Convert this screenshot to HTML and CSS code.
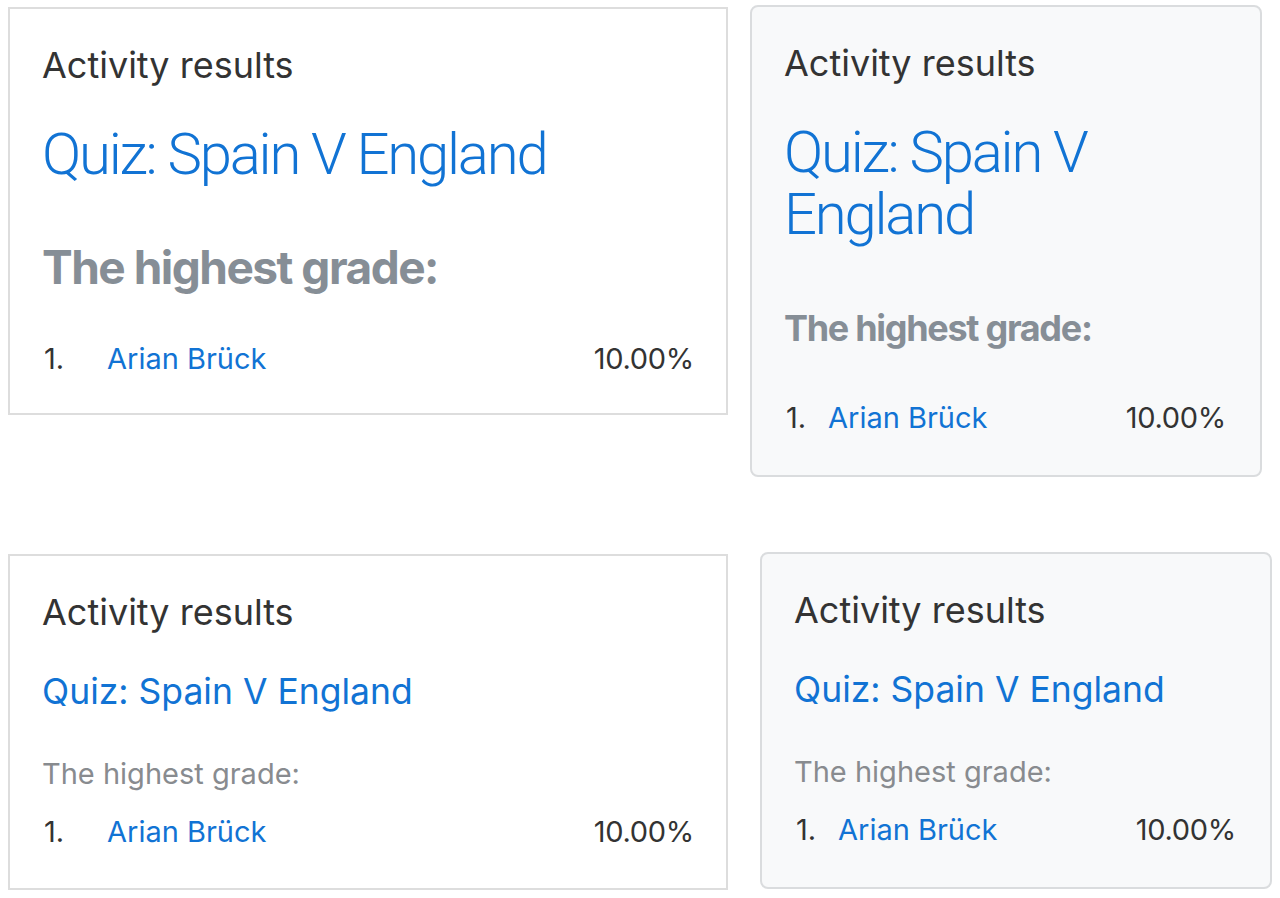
FILE: index.html
```html
<!DOCTYPE html>
<html lang="en">
<head>
<meta charset="utf-8">
<title>Activity results</title>
<link rel="stylesheet" href="styles.css">
</head>
<body>
<main class="page">
  <div class="row row-top">
    <section class="card card-plain card-a">
      <h5 class="card-title">Activity results</h5>
      <h2 class="quiz quiz-lg"><a href="#">Quiz: Spain V England</a></h2>
      <h3 class="grade grade-lg">The highest grade:</h3>
      <div class="result result-wide">
        <span class="rank">1.</span>
        <a class="name" href="#">Arian Brück</a>
        <span class="score">10.00%</span>
      </div>
    </section>
    <section class="card card-muted card-b">
      <h5 class="card-title">Activity results</h5>
      <h2 class="quiz quiz-lg"><a href="#">Quiz: Spain V England</a></h2>
      <h3 class="grade grade-md">The highest grade:</h3>
      <div class="result result-tight">
        <span class="rank">1.</span>
        <a class="name" href="#">Arian Brück</a>
        <span class="score">10.00%</span>
      </div>
    </section>
  </div>
  <div class="row row-bottom">
    <section class="card card-plain card-c">
      <h5 class="card-title">Activity results</h5>
      <h2 class="quiz quiz-sm"><a href="#">Quiz: Spain V England</a></h2>
      <h3 class="grade grade-sm">The highest grade:</h3>
      <div class="result result-wide">
        <span class="rank">1.</span>
        <a class="name" href="#">Arian Brück</a>
        <span class="score">10.00%</span>
      </div>
    </section>
    <section class="card card-muted card-d">
      <h5 class="card-title">Activity results</h5>
      <h2 class="quiz quiz-sm"><a href="#">Quiz: Spain V England</a></h2>
      <h3 class="grade grade-sm">The highest grade:</h3>
      <div class="result result-tight">
        <span class="rank">1.</span>
        <a class="name" href="#">Arian Brück</a>
        <span class="score">10.00%</span>
      </div>
    </section>
  </div>
</main>
</body>
</html>
```
FILE: styles.css
```css
html, body {
  margin: 0;
  padding: 0;
  background: #ffffff;
}

body {
  font-family: Inter, "Noto Sans", "Liberation Sans", sans-serif;
  color: #333333;
}

.page {
  display: flex;
  flex-direction: column;
}

.row {
  display: flex;
  align-items: flex-start;
}

.row-top {
  padding-top: 5px;
  gap: 22px;
}

.row-bottom {
  margin-top: 75px;
  gap: 32px;
}

.card {
  box-sizing: border-box;
  border: 2px solid #dddddd;
  padding: 34px 32px 34px 32px;
}

.card-plain {
  width: 720px;
  margin-left: 8px;
  margin-top: 2px;
  background: #ffffff;
}

.card-c {
  padding-bottom: 36px;
}

.card-muted {
  width: 512px;
  background: #f8f9fa;
  border-color: #dadcde;
  border-radius: 8px;
  padding-right: 34px;
  padding-bottom: 37px;
}

.card-title {
  margin: 0;
  font-size: 36px;
  font-weight: 400;
  line-height: 44px;
  color: #333333;
}

.quiz {
  margin: 0;
  font-weight: 300;
}

.quiz a,
.name {
  color: #1173d4;
  text-decoration: none;
}

.quiz-lg {
  font-family: Roboto, Inter, sans-serif;
  font-size: 58px;
  letter-spacing: -2.2px;
  line-height: 62px;
  margin-top: 36px;
}

.quiz-sm {
  font-size: 35.5px;
  font-weight: 400;
  line-height: 44px;
  margin-top: 36px;
}

.grade {
  margin: 0;
  color: #868e96;
}

.grade-lg {
  font-size: 46px;
  font-weight: 700;
  letter-spacing: -1.5px;
  line-height: 56px;
  margin-top: 54px;
}

.grade-md {
  font-size: 36px;
  font-weight: 700;
  letter-spacing: -1.3px;
  line-height: 44px;
  margin-top: 61px;
}

.grade-sm {
  font-size: 29px;
  font-weight: 400;
  line-height: 36px;
  margin-top: 42px;
  color: #888b8f;
}

.result {
  display: flex;
  align-items: baseline;
  font-size: 29px;
  line-height: 40px;
}

.grade-lg + .result {
  margin-top: 44px;
}

.grade-md + .result {
  margin-top: 48px;
}

.grade-sm + .result {
  margin-top: 20px;
}

.rank {
  color: #333333;
}

.result-wide .rank {
  width: 63px;
  padding-left: 2px;
}

.result-tight .rank {
  width: 42px;
  padding-left: 2px;
}

.score {
  margin-left: auto;
  letter-spacing: -0.3px;
  color: #333333;
}
```
